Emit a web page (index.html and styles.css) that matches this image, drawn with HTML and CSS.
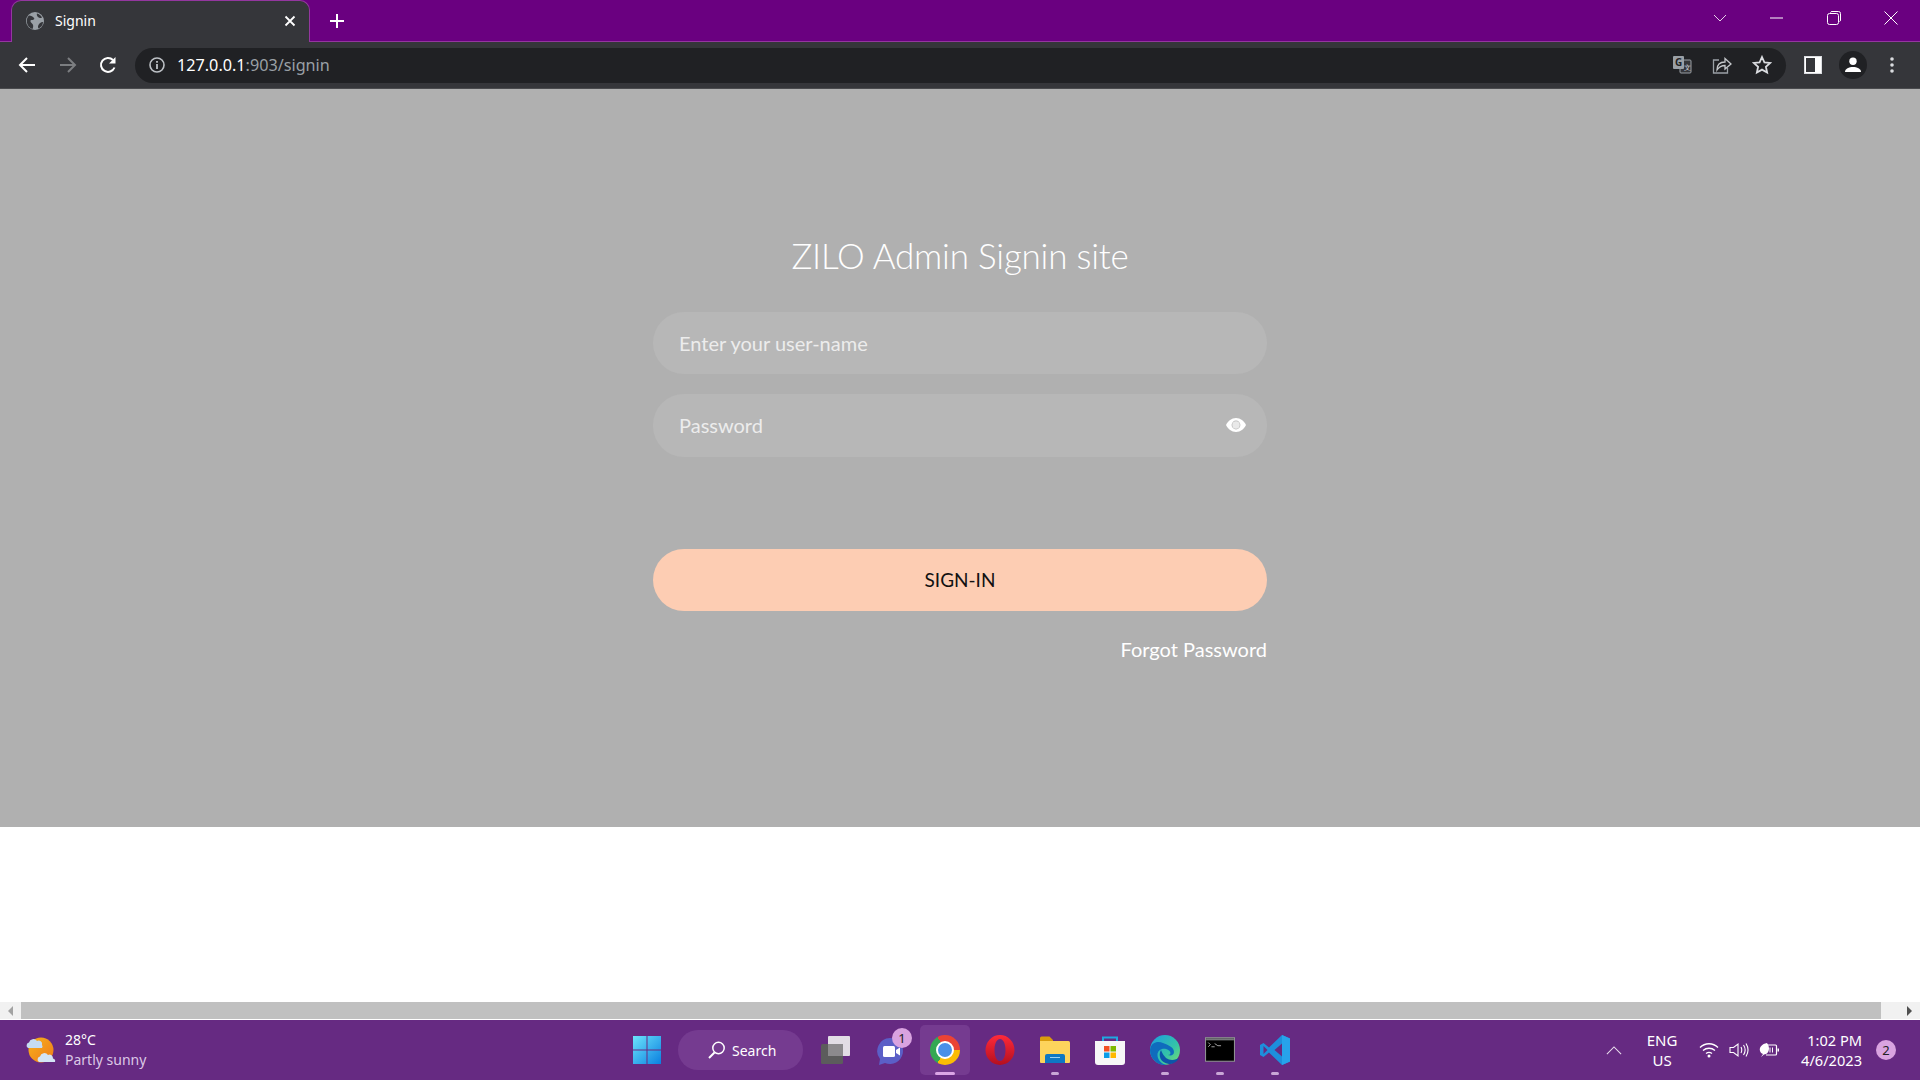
FILE: index.html
```html
<!DOCTYPE html>
<html lang="en">

<head>
    <meta charset="UTF-8">
    <meta name="viewport" content="width=device-width, initial-scale=1.0">
    <title>Signin</title>
    <link rel="stylesheet" href="styles.css">
</head>

<body>

    <!-- browser tab strip -->
    <header class="tabstrip">
        <div class="tab">
            <svg class="favicon" viewBox="0 0 18 18">
                <circle cx="9" cy="9" r="9" fill="#9aa0a6"/>
                <path d="M3 3.500c2 .3 4 1 5 2.500s-1 2-2.500 2S4 10 6 11.500 7 16 6.500 17C3 16 0 12 1 7c.5-1.500 1-2.500 2-3.500zM11 1.500c2 .5 4 2 5 4-1.500 1-3 .5-4-.5s-1.500-2.500-1-3.500zM17 10c0 3-2 5.500-4.500 6.500-1-1.500-.5-3.500 1-5s2.500-1.500 3.500-1.500z" fill="#35363a"/>
            </svg>
            <span class="tab-title">Signin</span>
            <svg class="tab-close" viewBox="0 0 12 12"><path d="M1.500 1.500l9 9M10.500 1.500l-9 9" stroke="#fff" stroke-width="1.800"/></svg>
        </div>
        <svg class="new-tab" viewBox="0 0 14 14"><path d="M7 0v14M0 7h14" stroke="#fff" stroke-width="2"/></svg>
        <div class="win-controls">
            <svg class="win-btn" viewBox="0 0 14 8"><path d="M1 1l6 6 6-6" fill="none" stroke="#e6cfe8" stroke-width="1"/></svg>
            <svg class="win-btn" viewBox="0 0 14 14"><path d="M0 7h13" stroke="#fff" stroke-width="1"/></svg>
            <svg class="win-btn" viewBox="0 0 14 14"><path d="M3.500 1.500a1.500 1.500 0 0 1 1.500-1h6.500a2 2 0 0 1 2 2V9a1.500 1.500 0 0 1-1 1.500" fill="none" stroke="#fff"/><rect x=".5" y="2.500" width="11" height="11" rx="2" fill="none" stroke="#fff"/></svg>
            <svg class="win-btn" viewBox="0 0 14 14"><path d="M.5.500l13 13M13.500.500l-13 13" stroke="#fff" stroke-width="1"/></svg>
        </div>
    </header>

    <!-- address bar -->
    <nav class="toolbar">
        <svg class="tool-icon" viewBox="0 0 20 20"><path d="M18 10H3M10 3l-7 7 7 7" fill="none" stroke="#fff" stroke-width="2"/></svg>
        <svg class="tool-icon" viewBox="0 0 20 20"><path d="M2 10h15M10 3l7 7-7 7" fill="none" stroke="#7c7e81" stroke-width="2"/></svg>
        <svg class="tool-icon tool-reload" viewBox="0 0 20 20"><path d="M16.500 12.500A7 7 0 1 1 15 5" fill="none" stroke="#fff" stroke-width="2"/><path d="M17.500 2v6.500H11z" fill="#fff"/></svg>
        <div class="omnibox">
            <svg class="info-icon" viewBox="0 0 16 16"><circle cx="8" cy="8" r="7" fill="none" stroke="#bdc1c6" stroke-width="1.600"/><path d="M8 7v5M8 4v1.800" stroke="#bdc1c6" stroke-width="1.800"/></svg>
            <span class="url"><span class="url-host">127.0.0.1</span>:903/signin</span>
            <div class="omni-actions">
                <svg class="omni-icon" viewBox="0 0 20 20">
                    <rect x="8" y="5" width="11" height="13" rx="1" fill="#35363a" stroke="#9aa0a6"/>
                    <rect x="1" y="1" width="11" height="13" rx="1" fill="#9aa0a6"/>
                    <text x="3" y="11" class="translate-g">G</text>
                    <text x="12" y="15" class="translate-x">文</text>
                </svg>
                <svg class="omni-icon" viewBox="0 0 20 20"><path d="M7 5H1.500v13h14v-5" fill="none" stroke="#9aa0a6" stroke-width="1.300"/><path d="M5 15c0-5 3-8 8-8V3.500l6 5.500-6 5v-3.500c-3.500 0-6 1.500-8 4.500z" fill="none" stroke="#c4c7ca" stroke-width="1.300"/></svg>
                <svg class="omni-icon" viewBox="0 0 20 20"><path d="M10 2l2.400 5.300 5.800.6-4.300 3.900 1.200 5.700-5.100-2.900-5.100 2.900 1.200-5.700L1.800 7.900l5.800-.6z" fill="none" stroke="#dadce0" stroke-width="1.800"/></svg>
            </div>
        </div>
        <svg class="panel-icon" viewBox="0 0 18 18"><rect x=".5" y=".5" width="17" height="17" fill="none" stroke="#dadce0"/><rect x="2" y="2" width="9" height="14" fill="#35363a"/><rect x="11" y="1" width="6" height="16" fill="#fff"/><rect x="1" y="1" width="1" height="16" fill="#fff"/><rect x="1" y="1" width="10" height="1" fill="#fff"/><rect x="1" y="16" width="10" height="1" fill="#fff"/></svg>
        <div class="avatar">
            <svg viewBox="0 0 16 16" class="avatar-icon"><circle cx="8" cy="4.200" r="3.700" fill="#fff"/><path d="M0 15c0-3.500 4-5 8-5s8 1.500 8 5z" fill="#fff"/></svg>
        </div>
        <svg class="menu-icon" viewBox="0 0 4 18"><circle cx="2" cy="3" r="1.800" fill="#dadce0"/><circle cx="2" cy="9" r="1.800" fill="#dadce0"/><circle cx="2" cy="15" r="1.800" fill="#dadce0"/></svg>
    </nav>

    <!-- the page itself -->
    <main class="page">
        <form class="signin">
            <h1 class="signin-title">ZILO Admin Signin site</h1>
            <input class="field" type="text" placeholder="Enter your user-name">
            <div class="password">
                <input class="field field-tall" type="password" placeholder="Password">
                <svg class="eye" viewBox="0 0 20 14"><path d="M10 0C5.500 0 2 3 0 7c2 4 5.500 7 10 7s8-3 10-7c-2-4-5.500-7-10-7z" fill="#fff"/><circle cx="10" cy="7" r="4.400" fill="#b7b7b7"/><circle cx="10" cy="7" r="3.700" fill="#e9e9e9"/></svg>
            </div>
            <button class="submit" type="button">SIGN-IN</button>
            <a class="forgot">Forgot Password</a>
        </form>
    </main>
    <div class="blank"></div>

    <div class="scrollbar">
        <div class="arrow arrow-left"></div>
        <div class="thumb"></div>
        <div class="arrow arrow-right"></div>
    </div>

    <!-- windows taskbar -->
    <footer class="taskbar">
        <div class="weather">
            <svg class="weather-icon" viewBox="0 0 32 30">
                <defs>
                    <linearGradient id="sun" x1="0" y1="0" x2="1" y2="1"><stop offset="0" stop-color="#f7b21c"/><stop offset="1" stop-color="#ee7a1a"/></linearGradient>
                </defs>
                <circle cx="16" cy="15" r="12.500" fill="url(#sun)"/>
                <path d="M3 13a3 3 0 0 1 1-5.500 4.500 4.500 0 0 1 8-1.500 3.500 3.500 0 0 1 5 4 2.500 2.500 0 0 1 0 3z" fill="#c5dcf2"/>
                <path d="M14 27a3 3 0 0 1 1-5.500 4.500 4.500 0 0 1 8-1.500 3.500 3.500 0 0 1 5 3.500 2.500 2.500 0 0 1 2 3.500z" fill="#d3e4f5"/>
            </svg>
            <div class="weather-text">
                <div class="temp">28°C</div>
                <div class="sky">Partly sunny</div>
            </div>
        </div>

        <div class="apps">
            <div class="app">
                <svg class="app-icon" viewBox="0 0 30 30">
                    <defs>
                        <linearGradient id="winblue" x1="0" y1="0" x2="1" y2="1"><stop offset="0" stop-color="#6ce4fb"/><stop offset="1" stop-color="#0a7fe0"/></linearGradient>
                    </defs>
                    <path d="M1 1h13.500v13.500H1zM15.500 1H29v13.500H15.500zM1 15.500h13.500V29H1zM15.500 15.500H29V29H15.500z" fill="url(#winblue)"/>
                </svg>
            </div>
            <div class="search">
                <svg class="search-icon" viewBox="0 0 18 18"><circle cx="10.500" cy="7" r="5.700" fill="none" stroke="#fff" stroke-width="1.500"/><path d="M6.500 11.500L1 17" stroke="#fff" stroke-width="2"/></svg>
                <span>Search</span>
            </div>
            <div class="app">
                <svg class="app-icon" viewBox="0 0 30 30"><rect x="1" y="9" width="22" height="20" rx="1.500" fill="#5c5c5c"/><rect x="8" y="1" width="22" height="20" rx="1" fill="#e9e7ea" opacity=".95"/><rect x="8" y="9" width="15" height="12" fill="#8c8a8d"/></svg>
            </div>
            <div class="app">
                <svg class="app-icon" viewBox="0 0 30 30">
                    <path d="M15 3a13 13 0 1 1-5 25l-6 2 1-6A13 13 0 0 1 15 3z" fill="#5b5fc7"/>
                    <rect x="8" y="11" width="12" height="11" rx="1.500" fill="#fff"/>
                    <path d="M21 15l4-2.500v8L21 18z" fill="#fff"/>
                </svg>
                <span class="app-badge">1</span>
            </div>
            <div class="app app-active">
                <div class="chrome"></div>
            </div>
            <div class="app">
                <svg class="app-icon" viewBox="0 0 30 30">
                    <defs>
                        <linearGradient id="opera" x1="0" y1="0" x2="0" y2="1"><stop offset="0" stop-color="#ff2a3a"/><stop offset="1" stop-color="#b30f1f"/></linearGradient>
                    </defs>
                    <path fill-rule="evenodd" d="M15 0a14.500 15 0 1 1 0 30 14.500 15 0 0 1 0-30zM15 4c-3.500 0-5.500 5-5.500 11s2 11 5.500 11 5.500-5 5.500-11S18.500 4 15 4z" fill="url(#opera)"/>
                </svg>
            </div>
            <div class="app app-open">
                <svg class="app-icon" viewBox="0 0 30 30">
                    <path d="M0 3a1.500 1.500 0 0 1 1.500-1.500h8L13 5v4H0z" fill="#d99c0c"/>
                    <path d="M0 6h28.500a1.500 1.500 0 0 1 1.500 1.500V27a1 1 0 0 1-1 1H1a1 1 0 0 1-1-1z" fill="#fdd45c"/>
                    <path d="M5 21a2 2 0 0 1 2-2h16a2 2 0 0 1 2 2v7H5z" fill="#0f78c4"/>
                    <path d="M10 22.500h10" stroke="#9bd2f5" stroke-width="1"/>
                </svg>
            </div>
            <div class="app">
                <svg class="app-icon" viewBox="0 0 30 30">
                    <path d="M8 7V2.500h14V7" fill="none" stroke="#1fa8e0" stroke-width="2"/>
                    <path d="M0 6h30v21a3 3 0 0 1-3 3H3a3 3 0 0 1-3-3z" fill="#f7f7f7"/>
                    <rect x="9" y="11" width="5.500" height="5.500" fill="#f25022"/><rect x="15.500" y="11" width="5.500" height="5.500" fill="#7fba00"/>
                    <rect x="9" y="17.500" width="5.500" height="5.500" fill="#0a9de8"/><rect x="15.500" y="17.500" width="5.500" height="5.500" fill="#ffb900"/>
                </svg>
            </div>
            <div class="app app-open">
                <svg class="app-icon" viewBox="0 0 30 30">
                    <defs>
                        <linearGradient id="edgetop" x1="0" y1="0" x2="1" y2="1"><stop offset="0" stop-color="#1b9de2"/><stop offset=".6" stop-color="#34c3a8"/><stop offset="1" stop-color="#7ee06a"/></linearGradient>
                    </defs>
                    <circle cx="15" cy="15" r="15" fill="url(#edgetop)"/>
                    <path d="M0 15C1 7 8 6 13 8s11 4 11 9c0 3-3 4-6 3 4 0 3-5-2-6-6-1-10 3-8 9 1 3 4 6 9 7C8 31 0 24 0 15z" fill="#0f6cbd"/>
                    <path d="M11 15c-3 5-1 13 8 14 4 0 8-2 10-6-3 2-9 3-13 0-2-2-4-5-5-8z" fill="#0d55a8"/>
                </svg>
            </div>
            <div class="app app-open">
                <svg class="app-icon" viewBox="0 0 28 24"><rect x=".5" y=".5" width="27" height="22" fill="#000" stroke="#8f8f92"/><rect x="1" y="1" width="26" height="2" fill="#77787c"/><path d="M3 5l2 2-2 2M6 9h3M9 6l3 2h3" fill="none" stroke="#b8b8b8" stroke-width=".8"/></svg>
            </div>
            <div class="app app-open">
                <svg class="app-icon" viewBox="0 0 30 30">
                    <path d="M22 0l8 3.500v23L22 30 9 17.500 3.500 22 0 20v-10l3.500-2L9 12.500z" fill="#1d8fdc"/>
                    <path d="M22 0l8 3.500v23L22 30z" fill="#27a3ea"/>
                    <path d="M22 8.500l-7.500 6.500 7.500 6.500z" fill="#662a82"/>
                    <path d="M3.500 11l4 4-4 4z" fill="#662a82"/>
                </svg>
            </div>
        </div>

        <div class="tray">
            <svg class="tray-chevron" viewBox="0 0 18 10"><path d="M1 9l8-8 8 8" fill="none" stroke="#e9dcec" stroke-width="1.200"/></svg>
            <div class="lang">
                <div>ENG</div>
                <div>US</div>
            </div>
            <svg class="tray-icon" viewBox="0 0 20 16"><path d="M1 5.500c5-5 13-5 18 0M4 8.500c3.500-3 8.500-3 12 0M7 11.500c2-1.500 4-1.500 6 0" fill="none" stroke="#fff" stroke-width="1.300"/><circle cx="10" cy="14" r="1.500" fill="#fff"/></svg>
            <svg class="tray-icon" viewBox="0 0 20 16"><path d="M1 5.500h3.500L9 2v12l-4.500-3.500H1z" fill="none" stroke="#fff" stroke-width="1.100"/><path d="M12 5c1 2 1 4 0 6M14.500 3c2 3 2 7 0 10M17 1.500c2.500 4 2.500 9 0 13" fill="none" stroke="#fff" stroke-width="1.100"/></svg>
            <svg class="tray-icon" viewBox="0 0 20 16"><path d="M7 3h9.500a1 1 0 0 1 1 1v8a1 1 0 0 1-1 1H7" fill="none" stroke="#fff" stroke-width="1.200"/><path d="M18.500 6.500H20v3h-1.500z" fill="#fff"/><path d="M8 1C3 2 0 5 1 9c.5 1.500 1.500 2.500 3 3L2 15l3-2.500c3 0 5-3 5-6 0-2-1-4-2-5.500z" fill="#fff"/><path d="M11 5.500v5M13.500 5.500v5" stroke="#fff"/></svg>
            <div class="clock">
                <div>1:02 PM</div>
                <div>4/6/2023</div>
            </div>
            <span class="notify">2</span>
        </div>
    </footer>

</body>

</html>
```

FILE: styles.css
```css
* {
    box-sizing: border-box;
}

body {
    margin: 0;
    height: 1080px;
    overflow: hidden;
    display: flex;
    flex-direction: column;
    font-family: "Noto Sans", "Open Sans", sans-serif;
    background-color: #fff;
}

svg {
    display: block;
    flex: none;
}

/* Tab strip */
.tabstrip {
    height: 42px;
    display: flex;
    align-items: flex-end;
    padding-left: 11px;
    background-color: #6a0080;
    border-bottom: 1px solid #94379f;
}

.tab {
    position: relative;
    width: 299px;
    height: 42px;
    margin-bottom: -1px;
    display: flex;
    align-items: center;
    padding: 0 13px 2px 14px;
    background-color: #35363a;
    border: 1px solid #94379f;
    border-bottom: none;
    border-radius: 10px 10px 0 0;
}

.favicon {
    width: 18px;
    height: 18px;
}

.tab-title {
    flex: 1;
    margin-left: 11px;
    font-size: 14px;
    color: #fff;
}

.tab-close {
    width: 12px;
    height: 12px;
}

.new-tab {
    width: 14px;
    height: 14px;
    margin: 0 0 13px 20px;
}

.win-controls {
    margin-left: auto;
    height: 42px;
    display: flex;
    align-items: center;
    padding: 0 22px 4px 0;
    gap: 43px;
}

.win-btn {
    width: 14px;
    height: 14px;
}

/* Toolbar */
.toolbar {
    height: 47px;
    display: flex;
    align-items: center;
    padding: 0 21px 0 17px;
    background-color: #35363a;
    border-bottom: 1px solid #4a4b4e;
}

.tool-icon {
    width: 20px;
    height: 20px;
    margin-right: 21px;
}

.tool-reload {
    margin-left: -1px;
}

.omnibox {
    width: 1651px;
    height: 35px;
    margin-left: -4px;
    display: flex;
    align-items: center;
    padding: 0 14px;
    color: #9aa0a6;
    background-color: #202124;
    border-radius: 18px;
}

.info-icon {
    width: 16px;
    height: 16px;
}

.url {
    margin-left: 12px;
    font-size: 16.2px;
}

.url-host {
    color: #fff;
}

.omni-actions {
    margin-left: auto;
    display: flex;
    gap: 20px;
    margin-right: 0;
}

.omni-icon {
    width: 20px;
    height: 20px;
}

.translate-g {
    font-size: 10px;
    font-weight: 700;
    fill: #202124;
}

.translate-x {
    font-size: 7px;
    fill: #dadce0;
}

.panel-icon {
    width: 18px;
    height: 18px;
    margin-left: 18px;
}

.avatar {
    width: 28px;
    height: 28px;
    margin-left: 17px;
    display: flex;
    align-items: center;
    justify-content: center;
    background-color: #202124;
    border-radius: 50%;
}

.avatar-icon {
    width: 16px;
    height: 16px;
}

.menu-icon {
    width: 4px;
    height: 18px;
    margin-left: 23px;
}

/* Page */
.page {
    height: 738px;
    padding-top: 145px;
    background-color: #b0b0b0;
}

.signin {
    width: 614px;
    margin: 0 auto;
    display: flex;
    flex-direction: column;
    font-family: Lato, sans-serif;
}

.signin-title {
    margin: 0 0 35px;
    font-size: 35px;
    line-height: 43px;
    letter-spacing: -0.2px;
    font-weight: 300;
    text-align: center;
    color: #fff;
}

.field {
    width: 100%;
    height: 62px;
    padding: 0 26px;
    font-family: inherit;
    font-size: 20px;
    color: #fff;
    background-color: #b7b7b7;
    border: none;
    border-radius: 31px;
    outline: none;
}

.field::placeholder {
    color: #ececec;
    opacity: 1;
}

.field-tall {
    height: 63px;
    display: block;
    padding-bottom: 2px;
}

.password {
    position: relative;
    margin-top: 20px;
}

.eye {
    position: absolute;
    top: 24px;
    right: 21px;
    width: 20px;
    height: 14px;
}

.submit {
    height: 62px;
    margin-top: 92px;
    padding-bottom: 2px;
    font-family: inherit;
    font-size: 19px;
    color: #111;
    background-color: #fdcdb3;
    border: none;
    border-radius: 31px;
}

.forgot {
    align-self: flex-end;
    margin-top: 26px;
    font-size: 20px;
    line-height: 24px;
    color: #fff;
}

.blank {
    flex: 1;
}

/* Horizontal scrollbar */
.scrollbar {
    height: 18px;
    display: flex;
    background-color: #f1f1f1;
    border-bottom: 1px solid #fff;
}

.arrow {
    width: 21px;
    display: flex;
    align-items: center;
    justify-content: center;
}

.arrow::before {
    content: "";
    border-style: solid;
    border-width: 5px 0 5px 5px;
    border-color: transparent transparent transparent #505050;
}

.arrow-left::before {
    border-width: 5px 5px 5px 0;
    border-color: transparent #a3a3a3 transparent transparent;
}

.arrow-right {
    width: 39px;
    padding-left: 18px;
}

.thumb {
    flex: 1;
    background-color: #c0c0c0;
}

/* Taskbar */
.taskbar {
    height: 60px;
    display: grid;
    grid-template-columns: 1fr auto 1fr;
    align-items: center;
    color: #fff;
    background-color: #662a82;
}

.weather {
    display: flex;
    align-items: center;
    padding-left: 25px;
}

.weather-icon {
    width: 32px;
    height: 30px;
}

.weather-text {
    margin-left: 8px;
    font-size: 14px;
    line-height: 20px;
}

.sky {
    color: #dcc8e6;
}

.apps {
    display: flex;
    align-items: center;
    margin-left: 1px;
}

.app {
    position: relative;
    width: 55px;
    height: 50px;
    display: flex;
    align-items: center;
    justify-content: center;
}

.app-icon {
    width: 30px;
    height: 30px;
}

.app-open::after,
.app-active::after {
    content: "";
    position: absolute;
    bottom: 0;
    left: 24px;
    width: 8px;
    height: 3px;
    background-color: #c9a6d6;
    border-radius: 2px;
}

.app-active {
    background-color: #753b90;
    border-radius: 5px;
    width: 50px;
    margin: 0 2px 0 3px;
}

.app-active::after {
    left: 15px;
    width: 20px;
    background-color: #dba5e6;
}

.app-badge {
    position: absolute;
    top: 3px;
    right: 5px;
    width: 20px;
    height: 20px;
    font-size: 13px;
    line-height: 20px;
    text-align: center;
    color: #222;
    background-color: #d9a3e0;
    border-radius: 50%;
}

.chrome {
    width: 30px;
    height: 30px;
    display: flex;
    align-items: center;
    justify-content: center;
    background: conic-gradient(from 330deg, #ea4335 0 120deg, #fbbc04 120deg 240deg, #34a853 240deg 360deg);
    border-radius: 50%;
}

.chrome::before {
    content: "";
    width: 14px;
    height: 14px;
    background-color: #4a90e8;
    border: 2px solid #fff;
    border-radius: 50%;
}

.search {
    width: 125px;
    height: 40px;
    margin: 0 4px;
    display: flex;
    align-items: center;
    padding-left: 30px;
    gap: 6px;
    font-size: 14px;
    background-color: #753b90;
    border-radius: 20px;
}

.search-icon {
    width: 18px;
    height: 18px;
}

.tray {
    display: flex;
    align-items: center;
    justify-content: flex-end;
    padding-right: 24px;
}

.tray-chevron {
    width: 16px;
    height: 9px;
    margin-right: 20px;
}

.lang {
    width: 40px;
    margin-right: 17px;
    font-size: 15px;
    line-height: 20px;
    text-align: center;
}

.tray-icon {
    width: 20px;
    height: 16px;
    margin-right: 10px;
}

.clock {
    margin-left: 12px;
    font-size: 14.6px;
    line-height: 20px;
    text-align: right;
}

.notify {
    width: 20px;
    height: 20px;
    margin-left: 14px;
    font-size: 13px;
    line-height: 20px;
    text-align: center;
    color: #222;
    background-color: #d9a3e0;
    border-radius: 50%;
}
```
